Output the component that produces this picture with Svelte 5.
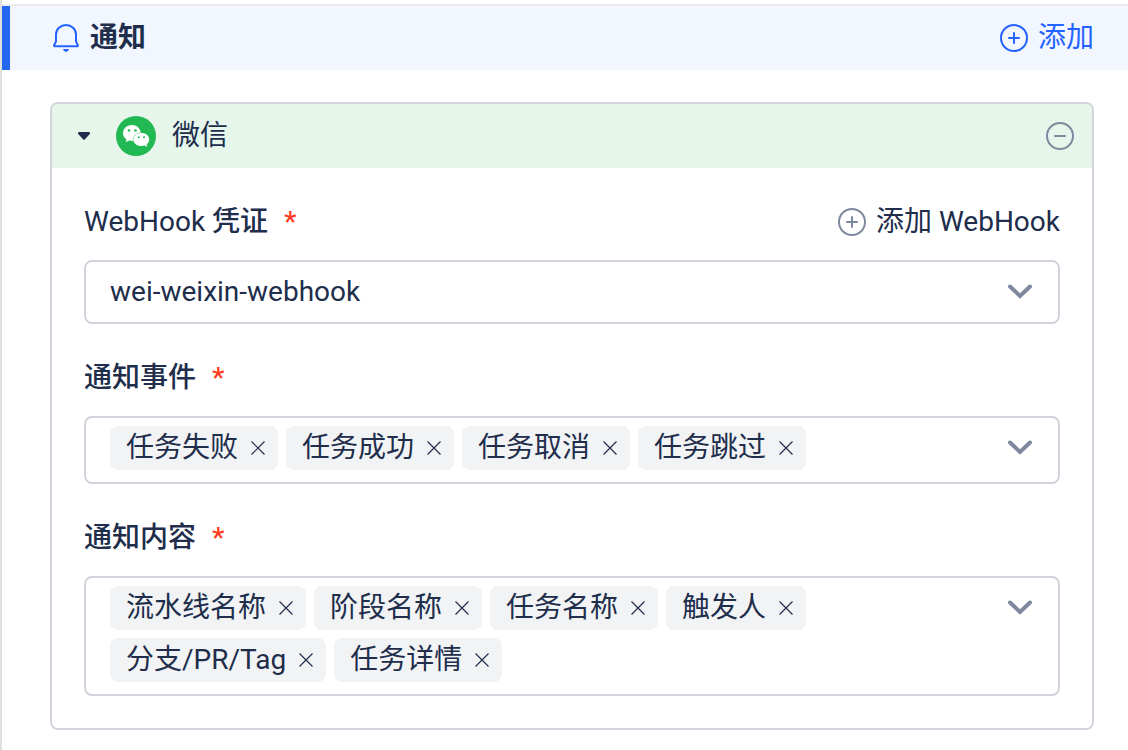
<script>
  let open = true;
  let credential = 'wei-weixin-webhook';

  let groups = [
    { id: 'events', label: '通知事件', tags: ['任务失败', '任务成功', '任务取消', '任务跳过'] },
    {
      id: 'content',
      label: '通知内容',
      tags: ['流水线名称', '阶段名称', '任务名称', '触发人', '分支/PR/Tag', '任务详情']
    }
  ];

  function removeTag(group, tag) {
    group.tags = group.tags.filter((t) => t !== tag);
    groups = groups;
  }
</script>

<div class="panel">
  <header class="bar">
    <h2 class="title">
      <svg class="icon" viewBox="0 0 28 28" aria-hidden="true">
        <path d="M4 17.500V10.500a10 9.500 0 0 1 20 0v7l1.800 3.600a.8.8 0 0 1-.7 1.200H2.900a.8.8 0 0 1-.7-1.200z" />
        <path class="solid" d="M11 25h6q-.8 3-3 3t-3-3z" />
      </svg>
      通知
    </h2>
    <button class="action primary" type="button">
      <svg class="icon" viewBox="0 0 28 28" aria-hidden="true">
        <circle cx="14" cy="14" r="13" />
        <path d="M14 9v10M9 14h10" />
      </svg>
      添加
    </button>
  </header>

  <section class="card">
    <div class="card-head">
      <button class="caret" type="button" aria-label="展开" aria-expanded={open} on:click={() => (open = !open)}>
        <svg viewBox="0 0 12 8" aria-hidden="true">
          <path d="M1 0h10q1 0 1 1v.8L7 7.300q-1 1-2 0L0 1.800V1q0-1 1-1z" />
        </svg>
      </button>
      <svg class="wechat" viewBox="0 0 40 40" aria-hidden="true">
        <circle cx="20" cy="20" r="20" fill="#22b955" />
        <path
          fill="#fff"
          d="M16.300 9C11.200 9 7 12.500 7 17.300c0 2.500 1.300 4.600 3.500 6.100l-.8 2.900 3.400-1.800c1.200.3 2.300.5 3.500.5h.7c1.200 3 4.600 5 8.400 5 1 0 2-.2 2.900-.5l2.700 1.400-.7-2.400c2-1.400 2.600-3.200 2.600-5.200 0-3.700-3.600-6.400-7.600-6.400h-.7C23.900 12 20.500 9 16.300 9z"
        />
        <g fill="#22b955">
          <circle cx="13" cy="14.500" r="1.300" />
          <circle cx="19.500" cy="14.500" r="1.300" />
          <circle cx="22.800" cy="21.200" r="1" />
          <circle cx="28" cy="21.200" r="1" />
        </g>
        <path fill="none" stroke="#22b955" stroke-width=".4" d="M24.900 16.800c-4.600.2-7.800 3.200-7.800 6.600 0 .7.1 1.300.3 1.900" />
      </svg>
      <h3 class="name">微信</h3>
      <button class="remove" type="button" aria-label="删除">
        <svg class="icon" viewBox="0 0 28 28" aria-hidden="true">
          <circle cx="14" cy="14" r="13" />
          <path d="M9 14h10" />
        </svg>
      </button>
    </div>

    {#if open}
      <div class="fields">
        <div class="field">
          <div class="label-row">
            <label class="label" for="credential">WebHook <b>凭证</b><span class="required">*</span></label>
            <button class="action" type="button">
              <svg class="icon" viewBox="0 0 28 28" aria-hidden="true">
                <circle cx="14" cy="14" r="13" />
                <path d="M14 9v10M9 14h10" />
              </svg>
              添加 WebHook
            </button>
          </div>
          <div class="select">
            <select id="credential" bind:value={credential}>
              <option value="wei-weixin-webhook">wei-weixin-webhook</option>
            </select>
            <svg class="chevron" viewBox="0 0 24 16" aria-hidden="true">
              <path d="M2 2.500l10 9.500L22 2.500" />
            </svg>
          </div>
        </div>

        {#each groups as group (group.id)}
          <div class="field" role="group" aria-labelledby={group.id}>
            <div class="label-row">
              <span class="label" id={group.id}><b>{group.label}</b><span class="required">*</span></span>
            </div>
            <div class="tag-box">
              <ul class="tags">
                {#each group.tags as tag (tag)}
                  <li class="tag">
                    {tag}
                    <button type="button" aria-label="移除 {tag}" on:click={() => removeTag(group, tag)}>
                      <svg viewBox="0 0 16 16" aria-hidden="true"><path d="M1.500 1.500l13 13M14.500 1.500l-13 13" /></svg>
                    </button>
                  </li>
                {/each}
              </ul>
              <button class="toggle" type="button" aria-label="选择{group.label}">
                <svg class="chevron" viewBox="0 0 24 16" aria-hidden="true">
                  <path d="M2 2.500l10 9.500L22 2.500" />
                </svg>
              </button>
            </div>
          </div>
        {/each}
      </div>
    {/if}
  </section>
</div>

<style>
  :global(body) {
    background: #fff;
  }

  .panel {
    min-height: 100vh;
    box-sizing: border-box;
    padding: 4px 0 20px;
    border-left: 2px solid #e0e0e0;
    color: #202d4b;
    font: 400 28px/44px Roboto, 'Noto Sans CJK SC', sans-serif;
  }

  button {
    display: flex;
    align-items: center;
    padding: 0;
    border: 0;
    background: none;
    color: inherit;
    font: inherit;
    cursor: pointer;
  }

  svg {
    display: block;
    flex-shrink: 0;
  }

  .icon {
    width: 28px;
    height: 28px;
    fill: none;
    stroke: #7f899d;
    stroke-width: 2;
    stroke-linecap: round;
    stroke-linejoin: round;
  }

  .bar {
    display: flex;
    align-items: center;
    justify-content: space-between;
    height: 64px;
    padding: 0 34px 0 50px;
    border-top: 2px solid #ebebeb;
    background: linear-gradient(to right, #2468f2 8px, #f2f7ff 8px);
  }

  .title {
    display: flex;
    align-items: center;
    gap: 10px;
    margin: 0;
    font-size: 28px;
    font-weight: 600;
  }

  .title,
  .primary {
    --accent: #2463ff;
  }
  .title .icon,
  .primary .icon {
    stroke: var(--accent);
  }
  .title .solid {
    fill: var(--accent);
    stroke: none;
  }

  .action {
    gap: 10px;
  }
  .primary {
    color: var(--accent);
  }

  .card {
    margin: 32px 34px 0 48px;
    border: 2px solid #d2d5dc;
    border-radius: 8px;
    overflow: hidden;
  }

  .card-head {
    display: flex;
    align-items: center;
    gap: 16px;
    height: 64px;
    padding: 0 18px 0 16px;
    background: #e6f6eb;
  }

  .caret {
    justify-content: center;
    width: 32px;
    height: 32px;
  }
  .caret svg {
    width: 12px;
    height: 8px;
    fill: #202d4b;
  }

  .wechat {
    width: 40px;
    height: 40px;
  }

  .name {
    flex: 1;
    margin: 0;
    font-size: 28px;
    font-weight: 400;
  }

  .fields {
    display: flex;
    flex-direction: column;
    gap: 32px;
    padding: 32px;
  }

  .label-row {
    display: flex;
    justify-content: space-between;
    margin-bottom: 16px;
  }
  .label b {
    font-weight: 500;
  }
  .required {
    margin-left: 16px;
    color: #ff3b22;
    font-weight: 500;
  }

  .select {
    position: relative;
  }
  .select select {
    display: block;
    width: 100%;
    height: 64px;
    box-sizing: border-box;
    padding: 0 60px 0 24px;
    border: 2px solid #d2d5dc;
    border-radius: 8px;
    appearance: none;
    background: #fff;
    color: inherit;
    font: inherit;
  }
  .select .chevron {
    position: absolute;
    top: 24px;
    right: 28px;
    pointer-events: none;
  }

  .chevron {
    width: 24px;
    height: 16px;
    fill: none;
    stroke: #7f899d;
    stroke-width: 4;
    stroke-linecap: round;
  }

  .tag-box {
    display: flex;
    align-items: flex-start;
    padding: 8px 26px 12px 24px;
    border: 2px solid #d2d5dc;
    border-radius: 8px;
  }

  .tags {
    display: flex;
    flex: 1;
    flex-wrap: wrap;
    gap: 8px;
    margin: 0;
    padding: 0;
    list-style: none;
  }

  .tag {
    display: flex;
    align-items: center;
    gap: 12px;
    height: 44px;
    padding: 0 12px 0 16px;
    border-radius: 8px;
    background: #f2f3f5;
  }
  .tag svg {
    width: 16px;
    height: 16px;
    stroke: #202d4b;
    stroke-width: 1.200;
  }

  .toggle {
    height: 44px;
  }
</style>
